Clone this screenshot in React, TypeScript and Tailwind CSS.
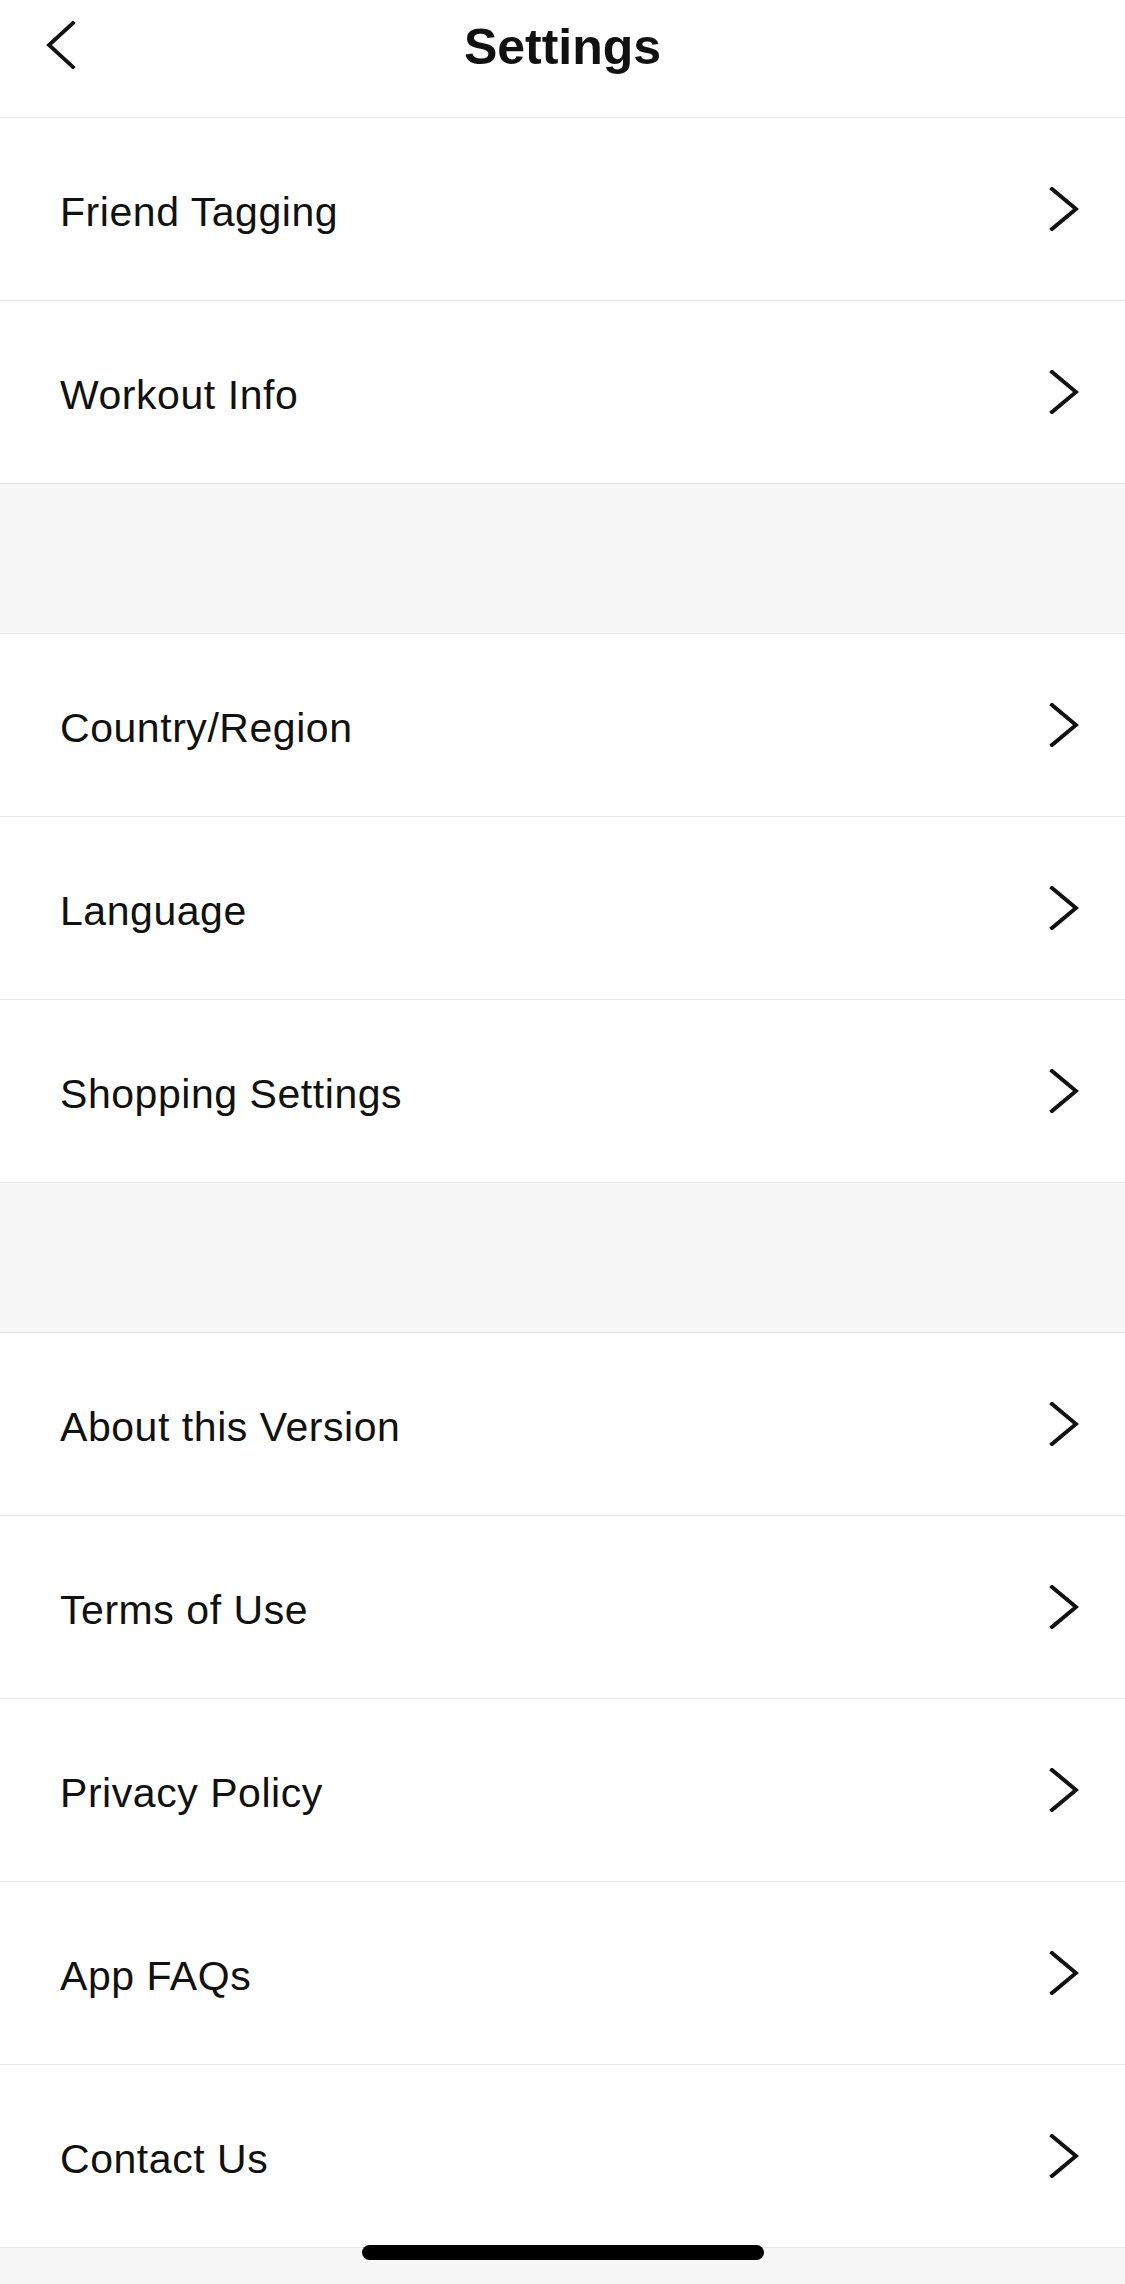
import React from 'react';

type Section = string[];

const sections: Section[] = [
  ['Friend Tagging', 'Workout Info'],
  ['Country/Region', 'Language', 'Shopping Settings'],
  ['About this Version', 'Terms of Use', 'Privacy Policy', 'App FAQs', 'Contact Us'],
];

const font = { fontFamily: '"Liberation Sans", Arial, sans-serif' };

const BackIcon = () => (
  <svg width="30" height="48" viewBox="0 0 30 48" fill="none" aria-hidden="true">
    <path d="M27 2 L3 24 L27 46" stroke="#111" strokeWidth="3.8" strokeLinecap="square" strokeLinejoin="miter" />
  </svg>
);

const ChevronRight = () => (
  <svg width="30" height="44" viewBox="0 0 30 44" fill="none" aria-hidden="true">
    <path d="M3 2 L27 22 L3 42" stroke="#111" strokeWidth="4" strokeLinecap="square" strokeLinejoin="miter" />
  </svg>
);

const Row: React.FC<{ label: string }> = ({ label }) => (
  <button className="w-full h-[183px] flex items-center justify-between pl-[60px] pr-[46px] bg-white border-b border-[#e6e6e6] text-left">
    <span className="text-[41px] leading-[46px] tracking-[0.55px] pt-[5px] text-[#111]">{label}</span>
    <ChevronRight />
  </button>
);

export default function App() {
  return (
    <div className="relative min-h-screen bg-[#f7f7f7]" style={font}>
      {/* Header */}
      <header className="grid grid-cols-[1fr_auto_1fr] h-[118px] bg-white border-b border-[#e6e6e6]">
        <div className="pl-[46px] pt-[21px]">
          <button aria-label="Back">
            <BackIcon />
          </button>
        </div>
        <h1 className="pt-[22px] text-[50px] leading-[50px] font-bold text-[#111]">Settings</h1>
        <div />
      </header>

      {sections.map((items, i) => (
        <div key={i}>
          {i > 0 && <div className="h-[150px] bg-[#f7f7f7] border-b border-[#e6e6e6]" />}
          <ul>
            {items.map((label) => (
              <li key={label}>
                <Row label={label} />
              </li>
            ))}
          </ul>
        </div>
      ))}

      {/* Home indicator */}
      <div className="absolute bottom-[24px] left-1/2 -translate-x-1/2 w-[402px] h-[15px] rounded-full bg-black" />
    </div>
  );
}
